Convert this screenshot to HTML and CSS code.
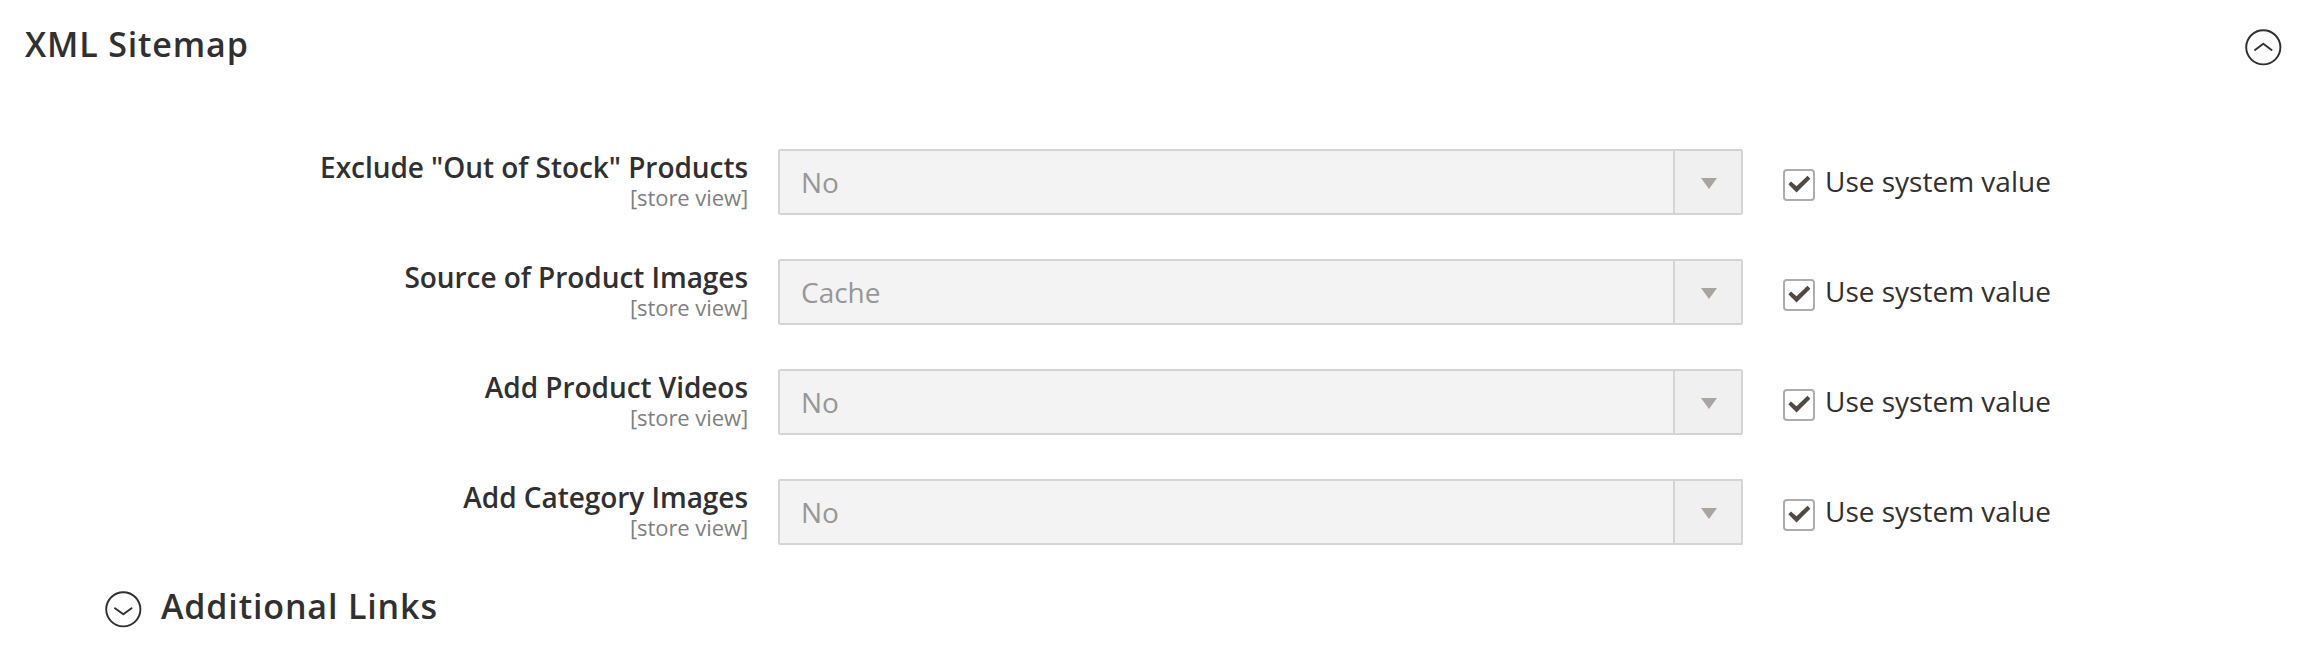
FILE: index.html
```html
<!DOCTYPE html>
<html lang="en"><head><meta charset="utf-8"><title>XML Sitemap</title><link rel="stylesheet" href="styles.css"></head>
<body>
<header class="section-head"><h1 class="title">XML Sitemap</h1>
<svg class="circle" viewBox="0 0 37 37"><circle cx="18.300" cy="18.300" r="17.100"/><path d="M10 21L18.300 14.700l8.300 6.300"/></svg></header>
<main class="fields">
<div class="field"><div class="label"><span class="name">Exclude "Out of Stock" Products</span><span class="scope">[store view]</span></div><div class="select"><span class="value">No</span><span class="arrow"></span></div><label class="system"><span class="box"><svg viewBox="0 0 32 32"><path d="M5.300 15.300L8 12.500l5.500 4.800L24.500 6.700l2.800 3.100L13.500 23.500z"/></svg></span><span class="text">Use system value</span></label></div>
<div class="field"><div class="label"><span class="name">Source of Product Images</span><span class="scope">[store view]</span></div><div class="select"><span class="value">Cache</span><span class="arrow"></span></div><label class="system"><span class="box"><svg viewBox="0 0 32 32"><path d="M5.300 15.300L8 12.500l5.500 4.800L24.500 6.700l2.800 3.100L13.500 23.500z"/></svg></span><span class="text">Use system value</span></label></div>
<div class="field"><div class="label"><span class="name">Add Product Videos</span><span class="scope">[store view]</span></div><div class="select"><span class="value">No</span><span class="arrow"></span></div><label class="system"><span class="box"><svg viewBox="0 0 32 32"><path d="M5.300 15.300L8 12.500l5.500 4.800L24.500 6.700l2.800 3.100L13.500 23.500z"/></svg></span><span class="text">Use system value</span></label></div>
<div class="field"><div class="label"><span class="name">Add Category Images</span><span class="scope">[store view]</span></div><div class="select"><span class="value">No</span><span class="arrow"></span></div><label class="system"><span class="box"><svg viewBox="0 0 32 32"><path d="M5.300 15.300L8 12.500l5.500 4.800L24.500 6.700l2.800 3.100L13.500 23.500z"/></svg></span><span class="text">Use system value</span></label></div>
</main>
<footer class="sub-head"><svg class="circle" viewBox="0 0 37 37"><circle cx="18.300" cy="18.300" r="17.100"/><path d="M10 17.300L18.300 23.300l8.300-6"/></svg><h2 class="title">Additional Links</h2></footer>
</body></html>
```
FILE: styles.css
```css
* { box-sizing: border-box; }
body { margin: 0; height: 660px; overflow: hidden; background: #fff; color: #303030; font-family: "Open Sans", sans-serif; }
.section-head { display: flex; justify-content: space-between; align-items: flex-start; height: 149px; padding: 20px 26px 0 25px; }
.title { margin: 0; font-size: 34px; line-height: 48px; font-weight: 600; letter-spacing: .85px; white-space: nowrap; }
.circle { width: 37px; height: 37px; flex: none; fill: none; stroke: #303030; stroke-width: 1.9; stroke-linecap: round; stroke-linejoin: round; }
.section-head .circle { margin-top: 9px; }
.fields { display: grid; gap: 44px; }
.field { display: flex; height: 66px; }
.label { width: 748px; margin: -1px 30px 0 0; text-align: right; white-space: nowrap; }
.name { display: block; font-size: 28px; font-weight: 600; line-height: 38px; letter-spacing: -.05px; }
.scope { display: block; font-size: 22px; line-height: 22px; letter-spacing: -.08px; color: #808080; }
.select { display: flex; width: 965px; height: 66px; border: 2px solid #d4d4d4; border-radius: 2px; background: #f3f3f3; }
.value { flex: 1; padding-left: 21px; font-size: 28px; line-height: 62px; color: #979797; }
.arrow { display: flex; align-items: center; justify-content: center; width: 68px; padding: 2px 0 0 1px; border-left: 2px solid #d4d4d4; background: #f0f0f0; }
.arrow::before { content: ""; border: 8px solid transparent; border-top: 11px solid #a8a49f; border-bottom: 0; }
.system { display: flex; margin-left: 40px; }
.box { width: 32px; height: 32px; margin-top: 20px; border: 2px solid #adadad; border-radius: 4px; }
.box svg { display: block; width: 32px; height: 32px; margin: -2px; fill: #514943; }
.text { margin-left: 10px; font-size: 28px; line-height: 64px; white-space: nowrap; }
.sub-head { display: flex; margin: 37px 0 0 105px; }
.sub-head .circle { margin-top: 9px; }
.sub-head .title { margin-left: 19px; }
```
